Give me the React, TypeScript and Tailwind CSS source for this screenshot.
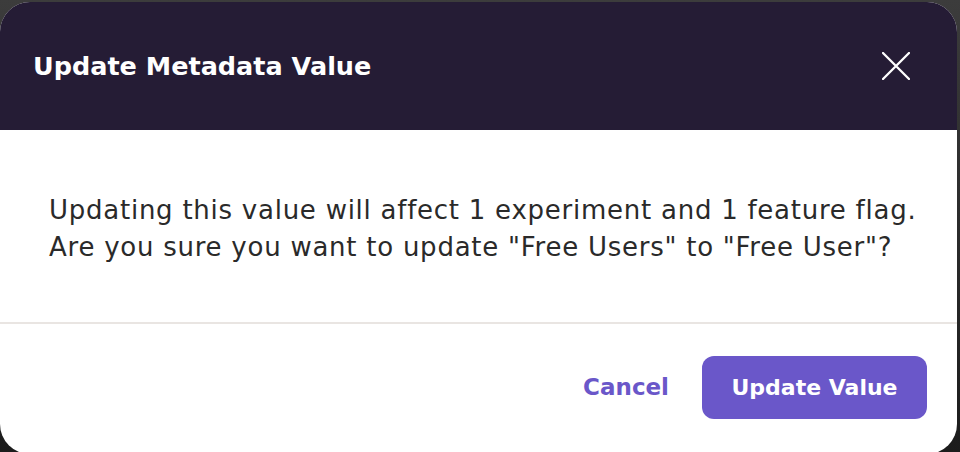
import React from "react";

export default function App() {
  return (
    <div className="h-[452px] w-[960px] overflow-hidden bg-gradient-to-b from-[#3c3c3c] to-[#1c1c1c] pt-[2px] pr-[3px] font-['DejaVu_Sans',sans-serif]">
      <div className="flex h-[452px] w-[957px] flex-col overflow-hidden rounded-[30px] bg-white">
        <div className="flex h-[128px] shrink-0 items-center justify-between bg-[#251c35] pl-[33px] pr-[47px]">
          <h2 className="text-[25.5px] font-bold text-white">Update Metadata Value</h2>
          <svg width="28" height="28" viewBox="0 0 28 28" fill="none" stroke="white" strokeWidth="2.3" strokeLinecap="round">
            <path d="M1 1L27 27M27 1L1 27" />
          </svg>
        </div>
        <div className="h-[194px] shrink-0 border-b-2 border-[#e9e5e2] pl-[49px] pt-[62px]">
          <p className="text-[26px] leading-[37px] tracking-[0.75px] text-[#2a2a2a]">
            Updating this value will affect 1 experiment and 1 feature flag.
            <br />
            Are you sure you want to update "Free Users" to "Free User"?
          </p>
        </div>
        <div className="flex items-center justify-end gap-[33px] pr-[30px] pt-[32px]">
          <button className="text-[23px] font-bold text-[#6a57c9]">Cancel</button>
          <button className="flex h-[63px] w-[225px] items-center justify-center rounded-[12px] bg-[#6a57c9] text-[22px] font-bold text-white">
            Update Value
          </button>
        </div>
      </div>
    </div>
  );
}
